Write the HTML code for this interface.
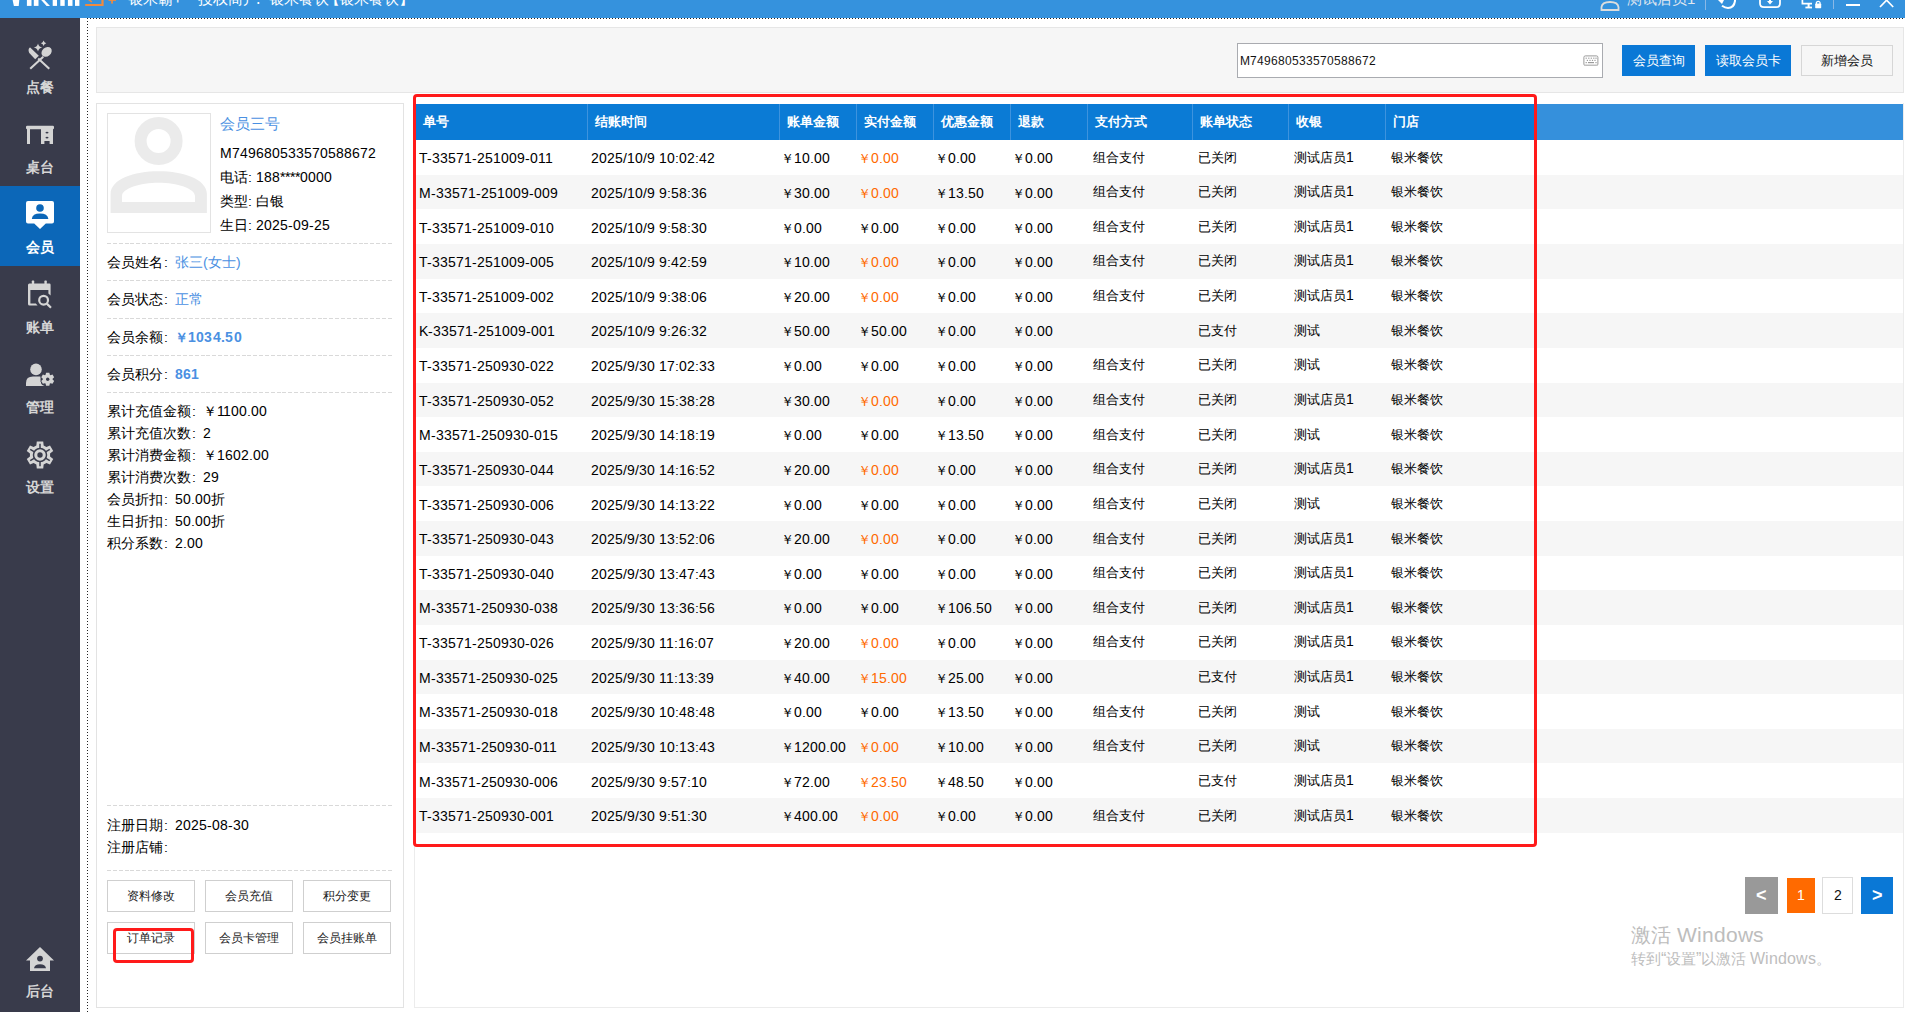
<!DOCTYPE html>
<html><head><meta charset="utf-8">
<style>
@font-face{font-family:"LS";src:local("Liberation Sans");size-adjust:104%;font-weight:normal}
@font-face{font-family:"LS";src:local("Liberation Sans Bold");size-adjust:104%;font-weight:bold}
@font-face{font-family:"LT";src:local("Liberation Sans");size-adjust:109.6%;font-weight:normal}
*{margin:0;padding:0;box-sizing:border-box}
html,body{width:1905px;height:1012px;overflow:hidden;background:#fff}
body{position:relative;font-family:"LS","Liberation Sans",sans-serif;font-size:13.7px;color:#1a1a1a}
div,span,svg{position:absolute}
span.i{position:static}
span.c{position:static;display:inline-block;width:11.5px;padding-left:1px}
#title{left:0;top:0;width:1905px;height:18px;background:#3592dd;overflow:hidden}
#side{left:0;top:18px;width:80px;height:994px;background:#393b4b}
.nav{left:0;width:80px;height:80px}
.nav.act{background:#0c67b8}
.nav .lb{left:0;width:80px;top:51px;text-align:center;color:#d6d6d6;font-size:14px;font-weight:bold;line-height:20px}
.nav.act .lb{color:#fff}
.nav svg{left:26px;top:14px;width:28px;height:28px}
#dotv{left:87px;top:18px;width:1px;height:994px;background:repeating-linear-gradient(to bottom,#222 0 1px,transparent 1px 3px)}
#doth{left:87px;top:18px;width:1818px;height:1px;background:repeating-linear-gradient(to right,#222 0 1px,transparent 1px 3px)}
#toppanel{left:96px;top:27px;width:1808px;height:66px;background:#f6f6f6;border:1px solid #e6e6e6}
#search{left:1237px;top:43px;width:366px;height:35px;background:#fff;border:1px solid #a9abb0}
#search .v{left:2px;top:9px;font-size:12px;color:#111;line-height:17px}
.bbtn{top:45px;height:31px;background:#0a78d6;color:#fff;font-size:13.4px;line-height:30px;text-align:center}
.wbtn{top:45px;height:31px;background:#f6f6f6;border:1px solid #d6d6d6;color:#111;font-size:13.4px;line-height:28px;text-align:center}
#lpanel{left:96px;top:103px;width:308px;height:905px;border:1px solid #e3e3e3;background:#fff}
#avatar{left:107px;top:113px;width:104px;height:120px;border:1px solid #e3e3e3;background:#fff}
.dash{left:107px;width:287px;height:1px;background:repeating-linear-gradient(to right,#d9d9d9 0 4px,transparent 4px 5.85px)}
.lt{left:107px;font-size:13.7px;line-height:18px;color:#000;white-space:nowrap}
.blue{color:#4a90e2}
.lbtn{width:88px;height:32px;border:1px solid #cfcfcf;background:#fff;font-size:12px;line-height:30px;text-align:center;color:#1a1a1a}
#rpanel{left:414px;top:103px;width:1490px;height:905px;border:1px solid #ececec;border-top:none;background:#fff}
.thead{left:415px;top:104px;width:1120px;height:36.1px;background:#0b7bd5}
.thead2{left:1535px;top:104px;width:368px;height:36.1px;background:#3590dc}
.th{top:104px;line-height:35.6px;color:#fff;font-weight:bold;font-size:13.3px;white-space:nowrap}
.thd{top:104px;width:1px;height:36.1px;background:#3d93de}
.stripe{left:415px;width:1488px;height:34.63px;background:#f6f6f6}
.td{padding-top:1.2px;line-height:34.63px;font-size:13px;font-family:"LT","Liberation Sans",sans-serif;color:#000;white-space:nowrap}
.td .y,.y{position:static}
.or{color:#ff6a00}
.red{border:3px solid #ff1a1a;border-radius:4px}
.pg{top:877px;height:37px;font-size:13.5px;line-height:37px;text-align:center}
#wm1{left:1631px;top:922px;font-size:20px;color:#bdbdbd;line-height:26px;white-space:nowrap}
#wm2{left:1631px;top:949px;font-size:15px;color:#bdbdbd;line-height:20px;white-space:nowrap}
</style></head>
<body>
<div id="title">
<svg viewBox="0 0 140 18" style="left:0;top:0;width:140px;height:18px">
<g fill="#fff">
<path d="M12.6 0 H19.3 L18.7 5.9 H13.9Z"/>
<rect x="26.9" y="0" width="4.6" height="5.9"/>
<rect x="33.8" y="0" width="4.7" height="5.9"/>
<path d="M41.2 0 H44.4 L50 5.9 H46.6Z"/>
<rect x="52.7" y="0" width="4.3" height="5.9"/>
<rect x="60.3" y="0" width="4.4" height="5.9"/>
<rect x="67.9" y="0" width="4.6" height="5.9"/>
<rect x="75" y="0" width="4.4" height="5.9"/>
</g>
<g fill="#f08a3e">
<path d="M85.2 4 H101.4 V0 H103.6 V5.9 H85.2Z"/>
<path d="M88 0 H90.6 L92.4 1.6 L91.4 2.4Z"/>
<rect x="108.5" y="0" width="7.5" height="0.9"/>
<rect x="111.2" y="0" width="1.7" height="3.6"/>
</g>
</svg>
<div style="left:128px;top:-9.5px;font-size:15px;line-height:16px;color:#fff;white-space:nowrap">银米霸+</div><div style="left:197.5px;top:-9.5px;font-size:15px;line-height:16px;color:#fff;white-space:nowrap">授权商户</div><div style="left:256px;top:-9.5px;font-size:15px;line-height:16px;color:#fff;white-space:nowrap">:</div><div style="left:268.5px;top:-9.5px;font-size:15px;line-height:16px;color:#fff;white-space:nowrap">银米餐饮</div><div style="left:325px;top:-9.5px;font-size:15px;line-height:16px;color:#fff;white-space:nowrap">【</div><div style="left:339px;top:-9.5px;font-size:15px;line-height:16px;color:#fff;white-space:nowrap">银米餐饮</div><div style="left:399px;top:-9.5px;font-size:15px;line-height:16px;color:#fff;white-space:nowrap">】</div>
<svg viewBox="0 0 20 12" style="left:1600px;top:0;width:20px;height:12px"><path d="M1.5 10 V7.2 Q2 2 10 2 Q18 2 18.5 7.2 V10Z" fill="none" stroke="#ddd" stroke-width="1.8"/></svg>
<div style="left:1627px;top:-9px;font-size:14.5px;line-height:16px;color:#e0e8f0;white-space:nowrap">测试店员1</div>
<div style="left:1705px;top:0;width:1px;height:10px;background:#8ab8e6"></div>
<svg viewBox="0 0 24 10" style="left:1714px;top:0;width:24px;height:10px"><path d="M4 0 L8 4 L10 0Z" fill="#fff"/><path d="M8 5.8 Q11 8 14 8 Q20 8 21 1 V0" fill="none" stroke="#fff" stroke-width="2"/></svg>
<svg viewBox="0 0 24 10" style="left:1758px;top:0;width:24px;height:10px"><path d="M2 0 V3.2 Q2 7.2 6 7.2 H18 Q22 7.2 22 3.2 V0" fill="none" stroke="#fff" stroke-width="1.8"/><path d="M9 1 H15 L12 4.4Z" fill="#fff"/><rect x="11" y="0" width="2" height="2" fill="#fff"/></svg>
<svg viewBox="0 0 24 10" style="left:1800px;top:0;width:24px;height:10px"><path d="M2.4 0 V3.6 H12" fill="none" stroke="#fff" stroke-width="1.7"/><rect x="7.6" y="3" width="2" height="4" fill="#fff"/><rect x="5.4" y="6.6" width="6.6" height="1.8" fill="#fff"/><rect x="15.2" y="3.6" width="6" height="4.6" rx="0.6" fill="#fff"/><path d="M16.4 4 V2.4 Q18.2 0.4 20 2.4 V4" fill="none" stroke="#fff" stroke-width="1.2"/></svg>
<div style="left:1833px;top:0;width:1px;height:9px;background:#8ab8e6"></div>
<div style="left:1846px;top:4px;width:14px;height:1.6px;background:#fff"></div>
<svg viewBox="0 0 16 10" style="left:1879px;top:0;width:16px;height:10px"><path d="M1 7 L7.6 0.2 L14.2 7" fill="none" stroke="#fff" stroke-width="1.7"/></svg>
</div>
<div id="side">
  <div class="nav" style="top:8px"><svg viewBox="0 0 40 40" style="left:20px;top:10px;width:40px;height:40px">
<g fill="#d4d4d4">
<path d="M10.2 11.4 C8 12 8.2 15.8 9.8 17.6 L15.2 23.2 L18.8 19.8 Z"/>
<ellipse cx="26.6" cy="15.9" rx="5.6" ry="4.4" transform="rotate(-40 26.6 15.9)"/>
<path d="M18 7.4 Q18.7 10.8 22.2 11.5 Q18.7 12.2 18 15.6 Q17.3 12.2 13.8 11.5 Q17.3 10.8 18 7.4Z"/>
<path d="M23.6 4.6 Q24.1 6.8 26.3 7.3 Q24.1 7.8 23.6 10 Q23.1 7.8 20.9 7.3 Q23.1 6.8 23.6 4.6Z"/>
</g>
<g stroke="#d4d4d4" stroke-width="2.1" stroke-linecap="square">
<line x1="11" y1="32" x2="22.5" y2="21.5"/>
<line x1="19" y1="23.2" x2="28.5" y2="32"/>
</g></svg><div class="lb">点餐</div></div>
  <div class="nav" style="top:88px"><svg viewBox="0 0 40 40" style="left:20px;top:10px;width:40px;height:40px">
<g fill="#d4d4d4">
<rect x="6" y="9.8" width="28" height="3.4" rx="1.2"/>
<rect x="7" y="12" width="3" height="16"/>
<path d="M21 12 H33 V28 H29.6 V25 H24.4 V28 H21Z"/>
</g>
<g fill="#393b4b"><ellipse cx="27" cy="16.6" rx="1.5" ry="0.9"/><ellipse cx="27" cy="21.6" rx="1.5" ry="0.9"/></g>
</svg><div class="lb">桌台</div></div>
  <div class="nav act" style="top:168px"><svg viewBox="0 0 40 40" style="left:20px;top:10px;width:40px;height:40px">
<path fill="#fff" d="M8 5 H32 Q34 5 34 7 V25.5 Q34 27.5 32 27.5 H25.8 L20 33 L14.2 27.5 H8 Q6 27.5 6 25.5 V7 Q6 5 8 5Z"/>
<g fill="#0c67b8"><circle cx="20" cy="12" r="3.8"/><path d="M11.8 23 Q12.4 17.6 20 17.6 Q27.6 17.6 28.4 23Z"/></g>
</svg><div class="lb">会员</div></div>
  <div class="nav" style="top:248px"><svg viewBox="0 0 40 40" style="left:20px;top:10px;width:40px;height:40px">
<g fill="#d4d4d4">
<path d="M9.4 7.4 H29.4 Q30.6 7.4 30.6 8.8 V19.6 L28.4 17.6 V14 H10.4 V27.4 H15.8 L17.6 29.6 H9.6 Q8 29.6 8 28 V9 Q8 7.4 9.4 7.4Z"/>
<rect x="11.8" y="4.6" width="2.4" height="3.6" rx="0.6"/>
<rect x="24.4" y="4.6" width="2.4" height="3.6" rx="0.6"/>
</g>
<circle cx="23.6" cy="24.2" r="4.4" fill="none" stroke="#d4d4d4" stroke-width="2.2"/>
<line x1="26.8" y1="27.6" x2="31" y2="31.8" stroke="#d4d4d4" stroke-width="2.2"/>
</svg><div class="lb">账单</div></div>
  <div class="nav" style="top:328px"><svg viewBox="0 0 40 40" style="left:20px;top:10px;width:40px;height:40px">
<g fill="#d4d4d4">
<circle cx="16" cy="13.4" r="5.8"/>
<path d="M6 30 V27 Q6 20.6 13 20.6 H19.8 Q21 20.6 21.2 21 Q19.6 23 21 25.4 Q20.4 28.6 24.6 30Z"/>
</g>
<path stroke="#393b4b" stroke-width="1.6" paint-order="stroke" fill="#d4d4d4" d="M25.55 18.80 L26.08 16.70 L29.32 16.70 L29.85 18.80 L30.44 19.14 L32.52 18.55 L34.14 21.35 L32.59 22.86 L32.59 23.54 L34.14 25.05 L32.52 27.85 L30.44 27.26 L29.85 27.60 L29.32 29.70 L26.08 29.70 L25.55 27.60 L24.96 27.26 L22.88 27.85 L21.26 25.05 L22.81 23.54 L22.81 22.86 L21.26 21.35 L22.88 18.55 L24.96 19.14Z"/><circle cx="27.7" cy="23.2" r="1.7" fill="#393b4b"/>
</svg><div class="lb">管理</div></div>
  <div class="nav" style="top:408px"><svg viewBox="0 0 40 40" style="left:20px;top:10px;width:40px;height:40px">
<path fill="#d4d4d4" d="M16.34 9.48 L16.78 5.58 L23.22 5.58 L23.66 9.48 L26.42 11.07 L30.01 9.50 L33.23 15.08 L30.07 17.40 L30.07 20.60 L33.23 22.92 L30.01 28.50 L26.42 26.93 L23.66 28.52 L23.22 32.42 L16.78 32.42 L16.34 28.52 L13.58 26.93 L9.99 28.50 L6.77 22.92 L9.93 20.60 L9.93 17.40 L6.77 15.08 L9.99 9.50 L13.58 11.07Z"/>
<g stroke="#393b4b" stroke-width="1.5" fill="none"><circle cx="20" cy="19" r="6.5"/><line x1="20.00" y1="12.60" x2="20.00" y2="7.70"/><line x1="25.54" y1="15.80" x2="29.79" y2="13.35"/><line x1="25.54" y1="22.20" x2="29.79" y2="24.65"/><line x1="20.00" y1="25.40" x2="20.00" y2="30.30"/><line x1="14.46" y1="22.20" x2="10.21" y2="24.65"/><line x1="14.46" y1="15.80" x2="10.21" y2="13.35"/></g>
<circle cx="20" cy="19" r="2.7" fill="#393b4b"/>
</svg><div class="lb">设置</div></div>
  <div class="nav" style="top:914px"><svg viewBox="0 0 40 40" style="left:20px;top:10px;width:40px;height:40px">
<path fill="#d4d4d4" d="M20 5 L34 18.6 H30 V29 H10 V18.6 H6Z"/>
<g fill="#393b4b"><circle cx="20" cy="16.6" r="2.9"/><path d="M14 26.2 Q14.6 22.2 20 22.2 Q25.4 22.2 26 26.2Z"/></g>
</svg><div class="lb" style="top:48.5px">后台</div></div>
</div>
<div id="dotv"></div><div id="doth"></div>
<div id="toppanel"></div>
<div id="search"><div class="v">M749680533570588672</div>
<svg viewBox="0 0 16 12" style="left:345px;top:11px;width:16px;height:12px">
<rect x="0.9" y="0.9" width="14" height="9.6" rx="1.4" fill="#fff" stroke="#9a9a9a" stroke-width="1"/>
<rect x="1.4" y="9.4" width="13" height="1.4" fill="#c8c8c8"/>
<g fill="#9a9a9a"><rect x="2.6" y="2.6" width="1.2" height="1.2"/><rect x="5.2" y="2.6" width="1.2" height="1.2"/><rect x="7.7" y="2.6" width="1.2" height="1.2"/><rect x="10.2" y="2.6" width="1.2" height="1.2"/><rect x="12.4" y="2.6" width="1.2" height="1.2"/>
<rect x="3.8" y="4.8" width="1.2" height="1.2"/><rect x="6.4" y="4.8" width="1.2" height="1.2"/><rect x="8.9" y="4.8" width="1.2" height="1.2"/><rect x="11.4" y="4.8" width="1.2" height="1.2"/>
<rect x="2.6" y="7" width="1.2" height="1.2"/><rect x="5" y="7" width="6" height="1.2"/><rect x="12.4" y="7" width="1.2" height="1.2"/></g>
</svg></div>
<div class="bbtn" style="left:1622px;width:73px">会员查询</div>
<div class="bbtn" style="left:1705px;width:86px">读取会员卡</div>
<div class="wbtn" style="left:1801px;width:92px">新增会员</div>

<div id="lpanel"></div>
<div id="avatar"><svg viewBox="107 113 104 120" style="left:-1px;top:-1px;width:104px;height:120px">
<circle cx="158.6" cy="141" r="18" fill="none" stroke="#ebebeb" stroke-width="12"/>
<path fill="#ebebeb" fill-rule="evenodd" d="M110.6 213 V194 C110.6 179 134 171.2 158.7 171.2 C183 171.2 206.9 179 206.9 194 V213 Z M122 202 V196 C122 188.6 140 182.7 158.7 182.7 C177 182.7 195 188.6 195 196 V202 Z"/>
</svg></div>
<div class="lt blue" style="left:220px;top:114px;font-size:15px;line-height:20px">会员三号</div>
<div class="lt" style="left:220px;top:144px">M749680533570588672</div>
<div class="lt" style="left:220px;top:168px">电话: 188****0000</div>
<div class="lt" style="left:220px;top:192px">类型: 白银</div>
<div class="lt" style="left:220px;top:216px">生日: 2025-09-25</div>
<div class="dash" style="top:243px"></div>
<div class="lt" style="top:253px">会员姓名<span class="c">:</span><span class="i blue">张三(女士)</span></div>
<div class="dash" style="top:280px"></div>
<div class="lt" style="top:290px">会员状态<span class="c">:</span><span class="i blue">正常</span></div>
<div class="dash" style="top:318px"></div>
<div class="lt" style="top:328px">会员余额<span class="c">:</span><span class="i blue" style="font-weight:bold;font-size:13px;letter-spacing:0.3px">￥1034.50</span></div>
<div class="dash" style="top:355px"></div>
<div class="lt" style="top:365px">会员积分<span class="c">:</span><span class="i blue" style="font-weight:bold;font-size:13px;letter-spacing:0.3px">861</span></div>
<div class="dash" style="top:392px"></div>
<div class="lt" style="top:402px">累计充值金额<span class="c">:</span>￥1100.00</div>
<div class="lt" style="top:424px">累计充值次数<span class="c">:</span>2</div>
<div class="lt" style="top:446px">累计消费金额<span class="c">:</span>￥1602.00</div>
<div class="lt" style="top:468px">累计消费次数<span class="c">:</span>29</div>
<div class="lt" style="top:490px">会员折扣<span class="c">:</span>50.00折</div>
<div class="lt" style="top:512px">生日折扣<span class="c">:</span>50.00折</div>
<div class="lt" style="top:534px">积分系数<span class="c">:</span>2.00</div>
<div class="dash" style="top:805px"></div>
<div class="lt" style="top:816px">注册日期<span class="c">:</span>2025-08-30</div>
<div class="lt" style="top:838px">注册店铺<span class="c">:</span></div>
<div class="dash" style="top:870px"></div>
<div class="lbtn" style="left:107px;top:880px">资料修改</div>
<div class="lbtn" style="left:205px;top:880px">会员充值</div>
<div class="lbtn" style="left:303px;top:880px">积分变更</div>
<div class="lbtn" style="left:107px;top:922px">订单记录</div>
<div class="lbtn" style="left:205px;top:922px">会员卡管理</div>
<div class="lbtn" style="left:303px;top:922px">会员挂账单</div>
<div class="red" style="left:113px;top:928px;width:81px;height:35px"></div>

<div id="rpanel"></div>
<div class="thead"></div><div class="thead2"></div>
<div class="th" style="left:423px">单号</div>
<div class="th" style="left:595px">结账时间</div>
<div class="thd" style="left:587px"></div>
<div class="th" style="left:787px">账单金额</div>
<div class="thd" style="left:779px"></div>
<div class="th" style="left:864px">实付金额</div>
<div class="thd" style="left:856px"></div>
<div class="th" style="left:941px">优惠金额</div>
<div class="thd" style="left:933px"></div>
<div class="th" style="left:1018px">退款</div>
<div class="thd" style="left:1010px"></div>
<div class="th" style="left:1095px">支付方式</div>
<div class="thd" style="left:1087px"></div>
<div class="th" style="left:1200px">账单状态</div>
<div class="thd" style="left:1192px"></div>
<div class="th" style="left:1296px">收银</div>
<div class="thd" style="left:1288px"></div>
<div class="th" style="left:1393px">门店</div>
<div class="thd" style="left:1385px"></div>
<div class="td" style="left:419px;top:140.10px;">T-33571-251009-011</div>
<div class="td" style="left:591px;top:140.10px;">2025/10/9 10:02:42</div>
<div class="td" style="left:780.7px;top:140.10px;"><span class="y">￥</span>10.00</div>
<div class="td or" style="left:857.7px;top:140.10px;"><span class="y">￥</span>0.00</div>
<div class="td" style="left:934.7px;top:140.10px;"><span class="y">￥</span>0.00</div>
<div class="td" style="left:1011.7px;top:140.10px;"><span class="y">￥</span>0.00</div>
<div class="td" style="left:1092.5px;top:140.10px;padding-top:0;margin-top:-0.5px;">组合支付</div>
<div class="td" style="left:1197.5px;top:140.10px;padding-top:0;margin-top:-0.5px;">已关闭</div>
<div class="td" style="left:1293.5px;top:140.10px;padding-top:0;margin-top:-0.5px;">测试店员1</div>
<div class="td" style="left:1390.5px;top:140.10px;padding-top:0;margin-top:-0.5px;">银米餐饮</div>
<div class="stripe" style="top:174.73px"></div>
<div class="td" style="left:419px;top:174.73px;">M-33571-251009-009</div>
<div class="td" style="left:591px;top:174.73px;">2025/10/9 9:58:36</div>
<div class="td" style="left:780.7px;top:174.73px;"><span class="y">￥</span>30.00</div>
<div class="td or" style="left:857.7px;top:174.73px;"><span class="y">￥</span>0.00</div>
<div class="td" style="left:934.7px;top:174.73px;"><span class="y">￥</span>13.50</div>
<div class="td" style="left:1011.7px;top:174.73px;"><span class="y">￥</span>0.00</div>
<div class="td" style="left:1092.5px;top:174.73px;padding-top:0;margin-top:-0.5px;">组合支付</div>
<div class="td" style="left:1197.5px;top:174.73px;padding-top:0;margin-top:-0.5px;">已关闭</div>
<div class="td" style="left:1293.5px;top:174.73px;padding-top:0;margin-top:-0.5px;">测试店员1</div>
<div class="td" style="left:1390.5px;top:174.73px;padding-top:0;margin-top:-0.5px;">银米餐饮</div>
<div class="td" style="left:419px;top:209.36px;">T-33571-251009-010</div>
<div class="td" style="left:591px;top:209.36px;">2025/10/9 9:58:30</div>
<div class="td" style="left:780.7px;top:209.36px;"><span class="y">￥</span>0.00</div>
<div class="td" style="left:857.7px;top:209.36px;"><span class="y">￥</span>0.00</div>
<div class="td" style="left:934.7px;top:209.36px;"><span class="y">￥</span>0.00</div>
<div class="td" style="left:1011.7px;top:209.36px;"><span class="y">￥</span>0.00</div>
<div class="td" style="left:1092.5px;top:209.36px;padding-top:0;margin-top:-0.5px;">组合支付</div>
<div class="td" style="left:1197.5px;top:209.36px;padding-top:0;margin-top:-0.5px;">已关闭</div>
<div class="td" style="left:1293.5px;top:209.36px;padding-top:0;margin-top:-0.5px;">测试店员1</div>
<div class="td" style="left:1390.5px;top:209.36px;padding-top:0;margin-top:-0.5px;">银米餐饮</div>
<div class="stripe" style="top:243.99px"></div>
<div class="td" style="left:419px;top:243.99px;">T-33571-251009-005</div>
<div class="td" style="left:591px;top:243.99px;">2025/10/9 9:42:59</div>
<div class="td" style="left:780.7px;top:243.99px;"><span class="y">￥</span>10.00</div>
<div class="td or" style="left:857.7px;top:243.99px;"><span class="y">￥</span>0.00</div>
<div class="td" style="left:934.7px;top:243.99px;"><span class="y">￥</span>0.00</div>
<div class="td" style="left:1011.7px;top:243.99px;"><span class="y">￥</span>0.00</div>
<div class="td" style="left:1092.5px;top:243.99px;padding-top:0;margin-top:-0.5px;">组合支付</div>
<div class="td" style="left:1197.5px;top:243.99px;padding-top:0;margin-top:-0.5px;">已关闭</div>
<div class="td" style="left:1293.5px;top:243.99px;padding-top:0;margin-top:-0.5px;">测试店员1</div>
<div class="td" style="left:1390.5px;top:243.99px;padding-top:0;margin-top:-0.5px;">银米餐饮</div>
<div class="td" style="left:419px;top:278.62px;">T-33571-251009-002</div>
<div class="td" style="left:591px;top:278.62px;">2025/10/9 9:38:06</div>
<div class="td" style="left:780.7px;top:278.62px;"><span class="y">￥</span>20.00</div>
<div class="td or" style="left:857.7px;top:278.62px;"><span class="y">￥</span>0.00</div>
<div class="td" style="left:934.7px;top:278.62px;"><span class="y">￥</span>0.00</div>
<div class="td" style="left:1011.7px;top:278.62px;"><span class="y">￥</span>0.00</div>
<div class="td" style="left:1092.5px;top:278.62px;padding-top:0;margin-top:-0.5px;">组合支付</div>
<div class="td" style="left:1197.5px;top:278.62px;padding-top:0;margin-top:-0.5px;">已关闭</div>
<div class="td" style="left:1293.5px;top:278.62px;padding-top:0;margin-top:-0.5px;">测试店员1</div>
<div class="td" style="left:1390.5px;top:278.62px;padding-top:0;margin-top:-0.5px;">银米餐饮</div>
<div class="stripe" style="top:313.25px"></div>
<div class="td" style="left:419px;top:313.25px;">K-33571-251009-001</div>
<div class="td" style="left:591px;top:313.25px;">2025/10/9 9:26:32</div>
<div class="td" style="left:780.7px;top:313.25px;"><span class="y">￥</span>50.00</div>
<div class="td" style="left:857.7px;top:313.25px;"><span class="y">￥</span>50.00</div>
<div class="td" style="left:934.7px;top:313.25px;"><span class="y">￥</span>0.00</div>
<div class="td" style="left:1011.7px;top:313.25px;"><span class="y">￥</span>0.00</div>
<div class="td" style="left:1092.5px;top:313.25px;padding-top:0;margin-top:-0.5px;"></div>
<div class="td" style="left:1197.5px;top:313.25px;padding-top:0;margin-top:-0.5px;">已支付</div>
<div class="td" style="left:1293.5px;top:313.25px;padding-top:0;margin-top:-0.5px;">测试</div>
<div class="td" style="left:1390.5px;top:313.25px;padding-top:0;margin-top:-0.5px;">银米餐饮</div>
<div class="td" style="left:419px;top:347.88px;">T-33571-250930-022</div>
<div class="td" style="left:591px;top:347.88px;">2025/9/30 17:02:33</div>
<div class="td" style="left:780.7px;top:347.88px;"><span class="y">￥</span>0.00</div>
<div class="td" style="left:857.7px;top:347.88px;"><span class="y">￥</span>0.00</div>
<div class="td" style="left:934.7px;top:347.88px;"><span class="y">￥</span>0.00</div>
<div class="td" style="left:1011.7px;top:347.88px;"><span class="y">￥</span>0.00</div>
<div class="td" style="left:1092.5px;top:347.88px;padding-top:0;margin-top:-0.5px;">组合支付</div>
<div class="td" style="left:1197.5px;top:347.88px;padding-top:0;margin-top:-0.5px;">已关闭</div>
<div class="td" style="left:1293.5px;top:347.88px;padding-top:0;margin-top:-0.5px;">测试</div>
<div class="td" style="left:1390.5px;top:347.88px;padding-top:0;margin-top:-0.5px;">银米餐饮</div>
<div class="stripe" style="top:382.51px"></div>
<div class="td" style="left:419px;top:382.51px;">T-33571-250930-052</div>
<div class="td" style="left:591px;top:382.51px;">2025/9/30 15:38:28</div>
<div class="td" style="left:780.7px;top:382.51px;"><span class="y">￥</span>30.00</div>
<div class="td or" style="left:857.7px;top:382.51px;"><span class="y">￥</span>0.00</div>
<div class="td" style="left:934.7px;top:382.51px;"><span class="y">￥</span>0.00</div>
<div class="td" style="left:1011.7px;top:382.51px;"><span class="y">￥</span>0.00</div>
<div class="td" style="left:1092.5px;top:382.51px;padding-top:0;margin-top:-0.5px;">组合支付</div>
<div class="td" style="left:1197.5px;top:382.51px;padding-top:0;margin-top:-0.5px;">已关闭</div>
<div class="td" style="left:1293.5px;top:382.51px;padding-top:0;margin-top:-0.5px;">测试店员1</div>
<div class="td" style="left:1390.5px;top:382.51px;padding-top:0;margin-top:-0.5px;">银米餐饮</div>
<div class="td" style="left:419px;top:417.14px;">M-33571-250930-015</div>
<div class="td" style="left:591px;top:417.14px;">2025/9/30 14:18:19</div>
<div class="td" style="left:780.7px;top:417.14px;"><span class="y">￥</span>0.00</div>
<div class="td" style="left:857.7px;top:417.14px;"><span class="y">￥</span>0.00</div>
<div class="td" style="left:934.7px;top:417.14px;"><span class="y">￥</span>13.50</div>
<div class="td" style="left:1011.7px;top:417.14px;"><span class="y">￥</span>0.00</div>
<div class="td" style="left:1092.5px;top:417.14px;padding-top:0;margin-top:-0.5px;">组合支付</div>
<div class="td" style="left:1197.5px;top:417.14px;padding-top:0;margin-top:-0.5px;">已关闭</div>
<div class="td" style="left:1293.5px;top:417.14px;padding-top:0;margin-top:-0.5px;">测试</div>
<div class="td" style="left:1390.5px;top:417.14px;padding-top:0;margin-top:-0.5px;">银米餐饮</div>
<div class="stripe" style="top:451.77px"></div>
<div class="td" style="left:419px;top:451.77px;">T-33571-250930-044</div>
<div class="td" style="left:591px;top:451.77px;">2025/9/30 14:16:52</div>
<div class="td" style="left:780.7px;top:451.77px;"><span class="y">￥</span>20.00</div>
<div class="td or" style="left:857.7px;top:451.77px;"><span class="y">￥</span>0.00</div>
<div class="td" style="left:934.7px;top:451.77px;"><span class="y">￥</span>0.00</div>
<div class="td" style="left:1011.7px;top:451.77px;"><span class="y">￥</span>0.00</div>
<div class="td" style="left:1092.5px;top:451.77px;padding-top:0;margin-top:-0.5px;">组合支付</div>
<div class="td" style="left:1197.5px;top:451.77px;padding-top:0;margin-top:-0.5px;">已关闭</div>
<div class="td" style="left:1293.5px;top:451.77px;padding-top:0;margin-top:-0.5px;">测试店员1</div>
<div class="td" style="left:1390.5px;top:451.77px;padding-top:0;margin-top:-0.5px;">银米餐饮</div>
<div class="td" style="left:419px;top:486.40px;">T-33571-250930-006</div>
<div class="td" style="left:591px;top:486.40px;">2025/9/30 14:13:22</div>
<div class="td" style="left:780.7px;top:486.40px;"><span class="y">￥</span>0.00</div>
<div class="td" style="left:857.7px;top:486.40px;"><span class="y">￥</span>0.00</div>
<div class="td" style="left:934.7px;top:486.40px;"><span class="y">￥</span>0.00</div>
<div class="td" style="left:1011.7px;top:486.40px;"><span class="y">￥</span>0.00</div>
<div class="td" style="left:1092.5px;top:486.40px;padding-top:0;margin-top:-0.5px;">组合支付</div>
<div class="td" style="left:1197.5px;top:486.40px;padding-top:0;margin-top:-0.5px;">已关闭</div>
<div class="td" style="left:1293.5px;top:486.40px;padding-top:0;margin-top:-0.5px;">测试</div>
<div class="td" style="left:1390.5px;top:486.40px;padding-top:0;margin-top:-0.5px;">银米餐饮</div>
<div class="stripe" style="top:521.03px"></div>
<div class="td" style="left:419px;top:521.03px;">T-33571-250930-043</div>
<div class="td" style="left:591px;top:521.03px;">2025/9/30 13:52:06</div>
<div class="td" style="left:780.7px;top:521.03px;"><span class="y">￥</span>20.00</div>
<div class="td or" style="left:857.7px;top:521.03px;"><span class="y">￥</span>0.00</div>
<div class="td" style="left:934.7px;top:521.03px;"><span class="y">￥</span>0.00</div>
<div class="td" style="left:1011.7px;top:521.03px;"><span class="y">￥</span>0.00</div>
<div class="td" style="left:1092.5px;top:521.03px;padding-top:0;margin-top:-0.5px;">组合支付</div>
<div class="td" style="left:1197.5px;top:521.03px;padding-top:0;margin-top:-0.5px;">已关闭</div>
<div class="td" style="left:1293.5px;top:521.03px;padding-top:0;margin-top:-0.5px;">测试店员1</div>
<div class="td" style="left:1390.5px;top:521.03px;padding-top:0;margin-top:-0.5px;">银米餐饮</div>
<div class="td" style="left:419px;top:555.66px;">T-33571-250930-040</div>
<div class="td" style="left:591px;top:555.66px;">2025/9/30 13:47:43</div>
<div class="td" style="left:780.7px;top:555.66px;"><span class="y">￥</span>0.00</div>
<div class="td" style="left:857.7px;top:555.66px;"><span class="y">￥</span>0.00</div>
<div class="td" style="left:934.7px;top:555.66px;"><span class="y">￥</span>0.00</div>
<div class="td" style="left:1011.7px;top:555.66px;"><span class="y">￥</span>0.00</div>
<div class="td" style="left:1092.5px;top:555.66px;padding-top:0;margin-top:-0.5px;">组合支付</div>
<div class="td" style="left:1197.5px;top:555.66px;padding-top:0;margin-top:-0.5px;">已关闭</div>
<div class="td" style="left:1293.5px;top:555.66px;padding-top:0;margin-top:-0.5px;">测试店员1</div>
<div class="td" style="left:1390.5px;top:555.66px;padding-top:0;margin-top:-0.5px;">银米餐饮</div>
<div class="stripe" style="top:590.29px"></div>
<div class="td" style="left:419px;top:590.29px;">M-33571-250930-038</div>
<div class="td" style="left:591px;top:590.29px;">2025/9/30 13:36:56</div>
<div class="td" style="left:780.7px;top:590.29px;"><span class="y">￥</span>0.00</div>
<div class="td" style="left:857.7px;top:590.29px;"><span class="y">￥</span>0.00</div>
<div class="td" style="left:934.7px;top:590.29px;"><span class="y">￥</span>106.50</div>
<div class="td" style="left:1011.7px;top:590.29px;"><span class="y">￥</span>0.00</div>
<div class="td" style="left:1092.5px;top:590.29px;padding-top:0;margin-top:-0.5px;">组合支付</div>
<div class="td" style="left:1197.5px;top:590.29px;padding-top:0;margin-top:-0.5px;">已关闭</div>
<div class="td" style="left:1293.5px;top:590.29px;padding-top:0;margin-top:-0.5px;">测试店员1</div>
<div class="td" style="left:1390.5px;top:590.29px;padding-top:0;margin-top:-0.5px;">银米餐饮</div>
<div class="td" style="left:419px;top:624.92px;">T-33571-250930-026</div>
<div class="td" style="left:591px;top:624.92px;">2025/9/30 11:16:07</div>
<div class="td" style="left:780.7px;top:624.92px;"><span class="y">￥</span>20.00</div>
<div class="td or" style="left:857.7px;top:624.92px;"><span class="y">￥</span>0.00</div>
<div class="td" style="left:934.7px;top:624.92px;"><span class="y">￥</span>0.00</div>
<div class="td" style="left:1011.7px;top:624.92px;"><span class="y">￥</span>0.00</div>
<div class="td" style="left:1092.5px;top:624.92px;padding-top:0;margin-top:-0.5px;">组合支付</div>
<div class="td" style="left:1197.5px;top:624.92px;padding-top:0;margin-top:-0.5px;">已关闭</div>
<div class="td" style="left:1293.5px;top:624.92px;padding-top:0;margin-top:-0.5px;">测试店员1</div>
<div class="td" style="left:1390.5px;top:624.92px;padding-top:0;margin-top:-0.5px;">银米餐饮</div>
<div class="stripe" style="top:659.55px"></div>
<div class="td" style="left:419px;top:659.55px;">M-33571-250930-025</div>
<div class="td" style="left:591px;top:659.55px;">2025/9/30 11:13:39</div>
<div class="td" style="left:780.7px;top:659.55px;"><span class="y">￥</span>40.00</div>
<div class="td or" style="left:857.7px;top:659.55px;"><span class="y">￥</span>15.00</div>
<div class="td" style="left:934.7px;top:659.55px;"><span class="y">￥</span>25.00</div>
<div class="td" style="left:1011.7px;top:659.55px;"><span class="y">￥</span>0.00</div>
<div class="td" style="left:1092.5px;top:659.55px;padding-top:0;margin-top:-0.5px;"></div>
<div class="td" style="left:1197.5px;top:659.55px;padding-top:0;margin-top:-0.5px;">已支付</div>
<div class="td" style="left:1293.5px;top:659.55px;padding-top:0;margin-top:-0.5px;">测试店员1</div>
<div class="td" style="left:1390.5px;top:659.55px;padding-top:0;margin-top:-0.5px;">银米餐饮</div>
<div class="td" style="left:419px;top:694.18px;">M-33571-250930-018</div>
<div class="td" style="left:591px;top:694.18px;">2025/9/30 10:48:48</div>
<div class="td" style="left:780.7px;top:694.18px;"><span class="y">￥</span>0.00</div>
<div class="td" style="left:857.7px;top:694.18px;"><span class="y">￥</span>0.00</div>
<div class="td" style="left:934.7px;top:694.18px;"><span class="y">￥</span>13.50</div>
<div class="td" style="left:1011.7px;top:694.18px;"><span class="y">￥</span>0.00</div>
<div class="td" style="left:1092.5px;top:694.18px;padding-top:0;margin-top:-0.5px;">组合支付</div>
<div class="td" style="left:1197.5px;top:694.18px;padding-top:0;margin-top:-0.5px;">已关闭</div>
<div class="td" style="left:1293.5px;top:694.18px;padding-top:0;margin-top:-0.5px;">测试</div>
<div class="td" style="left:1390.5px;top:694.18px;padding-top:0;margin-top:-0.5px;">银米餐饮</div>
<div class="stripe" style="top:728.81px"></div>
<div class="td" style="left:419px;top:728.81px;">M-33571-250930-011</div>
<div class="td" style="left:591px;top:728.81px;">2025/9/30 10:13:43</div>
<div class="td" style="left:780.7px;top:728.81px;"><span class="y">￥</span>1200.00</div>
<div class="td or" style="left:857.7px;top:728.81px;"><span class="y">￥</span>0.00</div>
<div class="td" style="left:934.7px;top:728.81px;"><span class="y">￥</span>10.00</div>
<div class="td" style="left:1011.7px;top:728.81px;"><span class="y">￥</span>0.00</div>
<div class="td" style="left:1092.5px;top:728.81px;padding-top:0;margin-top:-0.5px;">组合支付</div>
<div class="td" style="left:1197.5px;top:728.81px;padding-top:0;margin-top:-0.5px;">已关闭</div>
<div class="td" style="left:1293.5px;top:728.81px;padding-top:0;margin-top:-0.5px;">测试</div>
<div class="td" style="left:1390.5px;top:728.81px;padding-top:0;margin-top:-0.5px;">银米餐饮</div>
<div class="td" style="left:419px;top:763.44px;">M-33571-250930-006</div>
<div class="td" style="left:591px;top:763.44px;">2025/9/30 9:57:10</div>
<div class="td" style="left:780.7px;top:763.44px;"><span class="y">￥</span>72.00</div>
<div class="td or" style="left:857.7px;top:763.44px;"><span class="y">￥</span>23.50</div>
<div class="td" style="left:934.7px;top:763.44px;"><span class="y">￥</span>48.50</div>
<div class="td" style="left:1011.7px;top:763.44px;"><span class="y">￥</span>0.00</div>
<div class="td" style="left:1092.5px;top:763.44px;padding-top:0;margin-top:-0.5px;"></div>
<div class="td" style="left:1197.5px;top:763.44px;padding-top:0;margin-top:-0.5px;">已支付</div>
<div class="td" style="left:1293.5px;top:763.44px;padding-top:0;margin-top:-0.5px;">测试店员1</div>
<div class="td" style="left:1390.5px;top:763.44px;padding-top:0;margin-top:-0.5px;">银米餐饮</div>
<div class="stripe" style="top:798.07px"></div>
<div class="td" style="left:419px;top:798.07px;">T-33571-250930-001</div>
<div class="td" style="left:591px;top:798.07px;">2025/9/30 9:51:30</div>
<div class="td" style="left:780.7px;top:798.07px;"><span class="y">￥</span>400.00</div>
<div class="td or" style="left:857.7px;top:798.07px;"><span class="y">￥</span>0.00</div>
<div class="td" style="left:934.7px;top:798.07px;"><span class="y">￥</span>0.00</div>
<div class="td" style="left:1011.7px;top:798.07px;"><span class="y">￥</span>0.00</div>
<div class="td" style="left:1092.5px;top:798.07px;padding-top:0;margin-top:-0.5px;">组合支付</div>
<div class="td" style="left:1197.5px;top:798.07px;padding-top:0;margin-top:-0.5px;">已关闭</div>
<div class="td" style="left:1293.5px;top:798.07px;padding-top:0;margin-top:-0.5px;">测试店员1</div>
<div class="td" style="left:1390.5px;top:798.07px;padding-top:0;margin-top:-0.5px;">银米餐饮</div>
<div class="red" style="left:413px;top:93.5px;width:1124px;height:753px"></div>

<div class="pg" style="left:1745px;width:33px;background:#999;color:#fff;font-weight:bold;font-size:17px">&lt;</div>
<div class="pg" style="left:1786.5px;top:878px;height:35px;line-height:35px;width:28.5px;background:#ff6a00;color:#fff">1</div>
<div class="pg" style="left:1822px;width:31px;border:1px solid #ddd;color:#111;line-height:35px">2</div>
<div class="pg" style="left:1861px;width:32px;background:#0a78d6;color:#fff;font-weight:bold;font-size:17px">&gt;</div>
<div id="wm1">激活 Windows</div>
<div id="wm2">转到“设置”以激活 Windows。</div>
</body></html>
